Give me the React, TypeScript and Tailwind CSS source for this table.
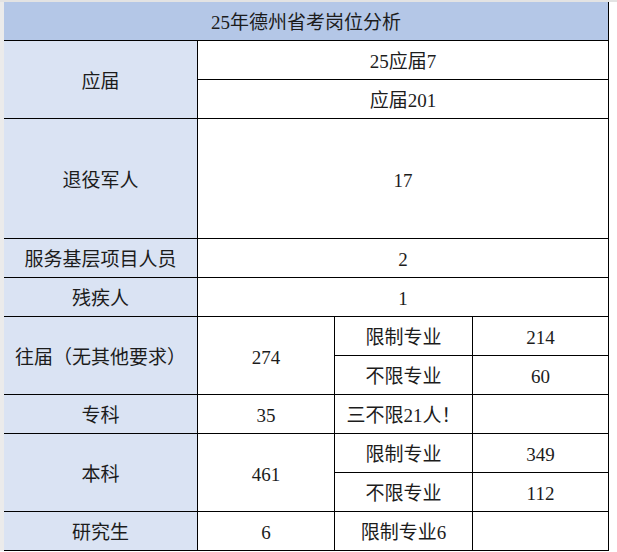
const cell = "bg-white flex items-center justify-center pt-[3px]";
const head = "bg-[#dae3f3] flex items-center justify-center pt-[3px]";

export default function App() {
  return (
    <div
      className="w-[617px] h-[552px] bg-white text-[19px] leading-none text-[#1c1c1c] overflow-hidden"
      style={{ fontFamily: '"Liberation Serif", "Noto Sans CJK SC", serif' }}
    >
      <div className="h-[2px] bg-[#e3e3e3]" />
      <div className="flex">
        <div className="w-[4px] bg-[#ebebeb]" />
        <div className="grid grid-cols-[193px_136px_137px_135px] grid-rows-[38px_38px_38px_119px_38px_38px_38px_38px_38px_38px_38px_38px] gap-px bg-black pr-px pb-px">
          <div className="col-span-4 bg-[#b4c7e7] flex items-center justify-center pt-[3px]">25年德州省考岗位分析</div>

          <div className={`${head} row-span-2`}>应届</div>
          <div className={`${cell} col-span-3`}>25应届7</div>
          <div className={`${cell} col-span-3`}>应届201</div>

          <div className={head}>退役军人</div>
          <div className={`${cell} col-span-3`}>17</div>

          <div className={head}>服务基层项目人员</div>
          <div className={`${cell} col-span-3`}>2</div>

          <div className={head}>残疾人</div>
          <div className={`${cell} col-span-3`}>1</div>

          <div className={`${head} row-span-2`}>往届（无其他要求）</div>
          <div className={`${cell} row-span-2`}>274</div>
          <div className={cell}>限制专业</div>
          <div className={cell}>214</div>
          <div className={cell}>不限专业</div>
          <div className={cell}>60</div>

          <div className={head}>专科</div>
          <div className={cell}>35</div>
          <div className={cell}>三不限21人！</div>
          <div className={cell} />

          <div className={`${head} row-span-2`}>本科</div>
          <div className={`${cell} row-span-2`}>461</div>
          <div className={cell}>限制专业</div>
          <div className={cell}>349</div>
          <div className={cell}>不限专业</div>
          <div className={cell}>112</div>

          <div className={head}>研究生</div>
          <div className={cell}>6</div>
          <div className={cell}>限制专业6</div>
          <div className={cell} />
        </div>
      </div>
    </div>
  );
}
